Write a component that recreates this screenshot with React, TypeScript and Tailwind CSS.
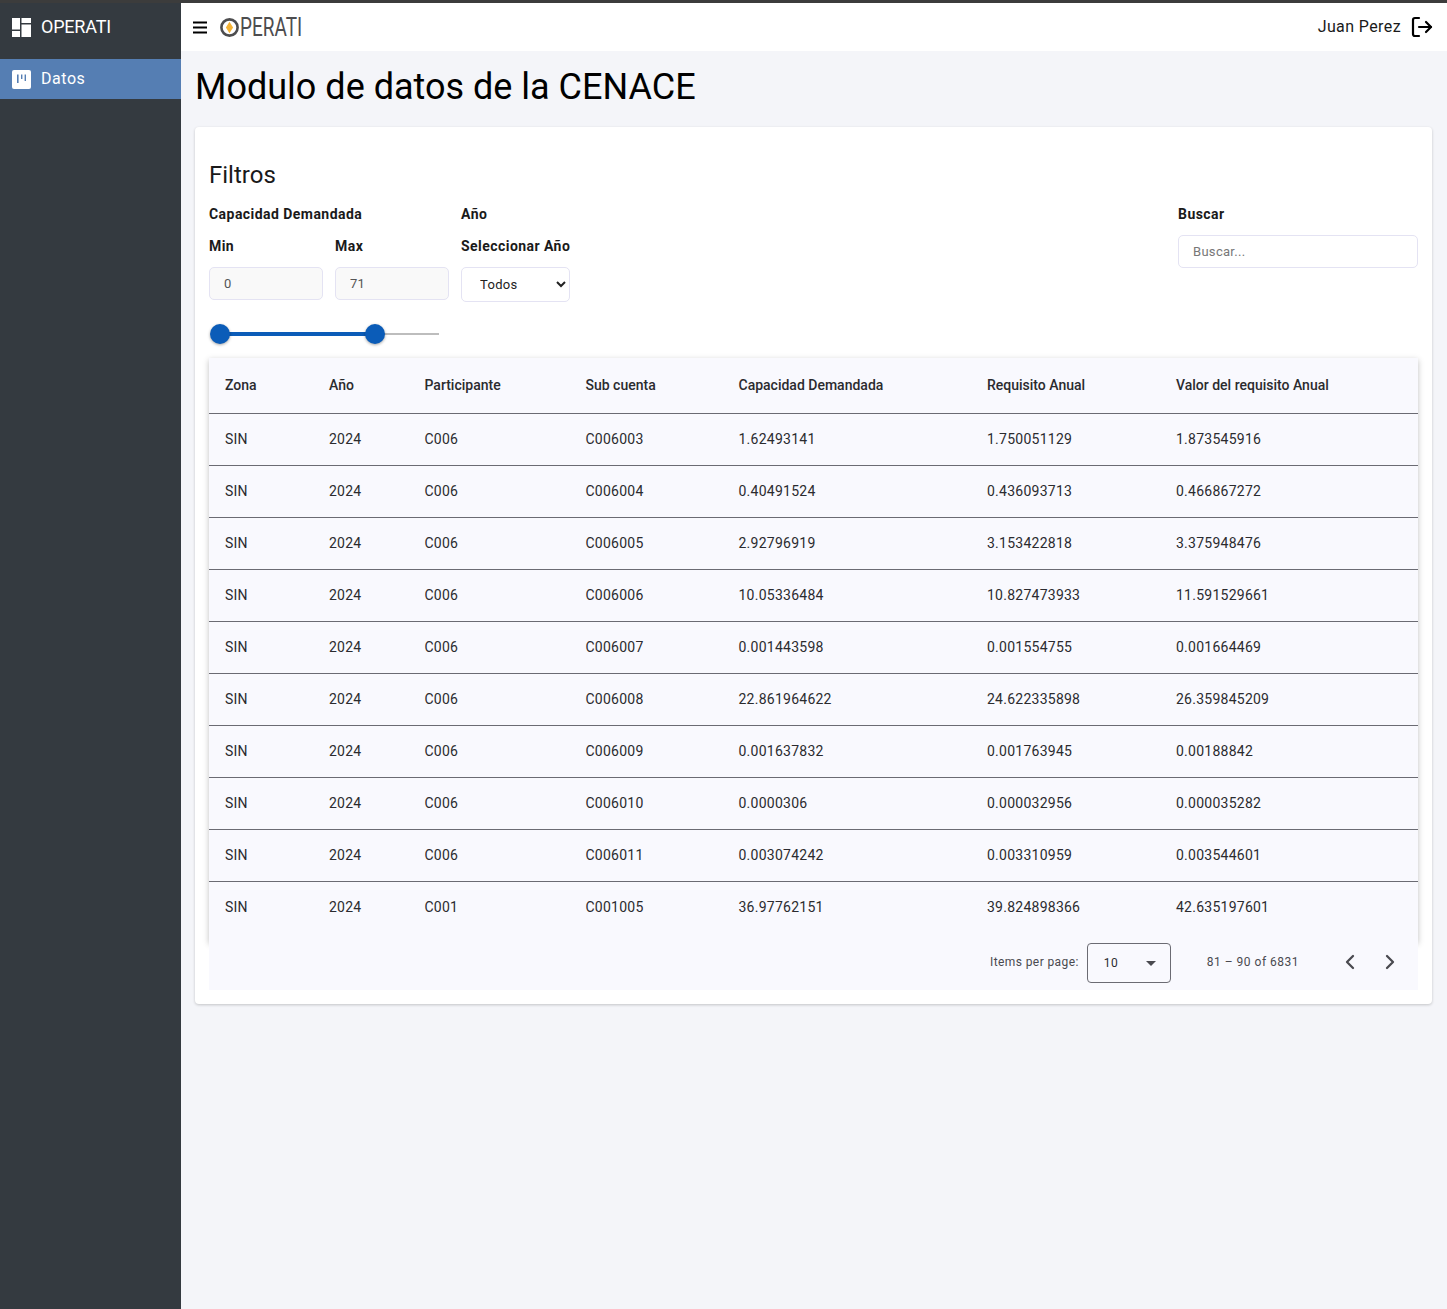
import React from 'react';
import { ChevronLeft, ChevronRight, LogOut } from 'lucide-react';

const columns = [
  { label: 'Zona', width: 'w-[104px]' },
  { label: 'Año', width: 'w-[95.5px]' },
  { label: 'Participante', width: 'w-[161px]' },
  { label: 'Sub cuenta', width: 'w-[153px]' },
  { label: 'Capacidad Demandada', width: 'w-[248.5px]' },
  { label: 'Requisito Anual', width: 'w-[189px]' },
  { label: 'Valor del requisito Anual', width: '' },
];

const rows = [
  ['SIN', '2024', 'C006', 'C006003', '1.62493141', '1.750051129', '1.873545916'],
  ['SIN', '2024', 'C006', 'C006004', '0.40491524', '0.436093713', '0.466867272'],
  ['SIN', '2024', 'C006', 'C006005', '2.92796919', '3.153422818', '3.375948476'],
  ['SIN', '2024', 'C006', 'C006006', '10.05336484', '10.827473933', '11.591529661'],
  ['SIN', '2024', 'C006', 'C006007', '0.001443598', '0.001554755', '0.001664469'],
  ['SIN', '2024', 'C006', 'C006008', '22.861964622', '24.622335898', '26.359845209'],
  ['SIN', '2024', 'C006', 'C006009', '0.001637832', '0.001763945', '0.00188842'],
  ['SIN', '2024', 'C006', 'C006010', '0.0000306', '0.000032956', '0.000035282'],
  ['SIN', '2024', 'C006', 'C006011', '0.003074242', '0.003310959', '0.003544601'],
  ['SIN', '2024', 'C001', 'C001005', '36.97762151', '39.824898366', '42.635197601'],
];

function Sidebar() {
  return (
    <aside className="w-[181px] shrink-0 bg-[#343a40] text-white">
      <div className="flex h-[48px] items-center gap-[10px] pl-[12px]">
        <svg width="19" height="19" viewBox="0 0 19 19" fill="#fff">
          <rect x="0" y="0" width="8" height="11.5" />
          <rect x="9.5" y="0" width="9.5" height="5" />
          <rect x="9.5" y="6.5" width="9.5" height="12.5" />
          <rect x="0" y="13" width="8" height="6" />
        </svg>
        <span className="pb-[2px] text-[18px] tracking-[-0.2px]">OPERATI</span>
      </div>
      <div className="mt-[8px] flex h-[40px] items-center gap-[10px] bg-[#557eb3] pl-[12px]">
        <svg width="19" height="19" viewBox="0 0 19 19">
          <rect width="19" height="19" rx="2" fill="#fff" />
          <path d="M5 4.5h1.6V13H5zM9 4.5h1.4V9H9zM12.6 4.5H14V11h-1.4z" fill="#557eb3" />
        </svg>
        <span className="text-[16px] tracking-[0.55px]">Datos</span>
      </div>
    </aside>
  );
}

function Header() {
  return (
    <header className="flex h-[48px] items-center justify-between bg-white pl-[12px] pr-[13px]">
      <div className="flex items-center">
        <svg width="14" height="13" viewBox="0 0 14 13" fill="#000">
          <rect y="0.5" width="14" height="2" />
          <rect y="5.5" width="14" height="2" />
          <rect y="10.5" width="14" height="2" />
        </svg>
        <svg width="19" height="19" viewBox="0 0 19 19" className="ml-[13px]">
          <circle cx="9.5" cy="9.5" r="8.1" fill="none" stroke="#4d4d4f" strokeWidth="2.6" />
          <path d="M9.5 3.8 5.9 9.4l3.6 5.8 3.6-5.8z" fill="#f5b335" />
        </svg>
        <span className="ml-[1px] origin-left scale-x-[0.76] text-[25px] font-normal leading-none text-[#4d4d4f]">PERATI</span>
      </div>
      <div className="flex items-center gap-[9px]">
        <span className="text-[16px] tracking-[0.4px] text-[#1a1a1a]">Juan Perez</span>
        <LogOut size={24} strokeWidth={2.2} className="text-black" />
      </div>
    </header>
  );
}

function Filters() {
  return (
    <div className="flex items-start justify-between">
      <div className="flex gap-[12px]">
        <div className="w-[240px]">
          <p className="text-[14px] font-bold leading-[20px] tracking-[0.45px] text-[#1a1a1a]">Capacidad Demandada</p>
          <div className="mt-[12px] flex gap-[12px]">
            <div className="w-[114px]">
              <p className="text-[14px] font-bold leading-[20px] tracking-[0.45px] text-[#1a1a1a]">Min</p>
              <input readOnly value="0" className="mt-[11px] h-[33px] w-full rounded-[5px] border border-[#e4e3f3] bg-[#f9f9f9] px-[14px] text-[13px] tracking-[0.3px] text-[#555] outline-none" />
            </div>
            <div className="w-[114px]">
              <p className="text-[14px] font-bold leading-[20px] tracking-[0.45px] text-[#1a1a1a]">Max</p>
              <input readOnly value="71" className="mt-[11px] h-[33px] w-full rounded-[5px] border border-[#e4e3f3] bg-[#f9f9f9] px-[14px] text-[13px] tracking-[0.3px] text-[#555] outline-none" />
            </div>
          </div>
        </div>
        <div>
          <p className="text-[14px] font-bold leading-[20px] tracking-[0.45px] text-[#1a1a1a]">Año</p>
          <p className="mt-[12px] text-[14px] font-bold leading-[20px] tracking-[0.45px] text-[#1a1a1a]">Seleccionar Año</p>
          <select className="mt-[11px] h-[35px] w-[109px] rounded-[5px] border border-[#e4e3f3] bg-white pl-[14px] text-[13px] tracking-[0.3px] text-[#222] outline-none" defaultValue="Todos">
            <option>Todos</option>
          </select>
        </div>
      </div>
      <div className="w-[240px]">
        <p className="text-[14px] font-bold leading-[20px] tracking-[0.45px] text-[#1a1a1a]">Buscar</p>
        <input placeholder="Buscar..." className="mt-[11px] h-[33px] w-full rounded-[5px] border border-[#e4e3f3] bg-white px-[14px] text-[13px] tracking-[0.3px] outline-none placeholder:text-[#777]" />
      </div>
    </div>
  );
}

function RangeSlider() {
  return (
    <div className="relative mt-[20px] h-[24px] w-[230px]">
      <div className="absolute left-[10px] right-0 top-[11px] h-[2px] bg-[#bdbdbd]" />
      <div className="absolute left-[10px] top-[10px] h-[4px] w-[156px] bg-[#0b5cb8]" />
      <div className="absolute left-[1px] top-[2px] h-[20px] w-[20px] rounded-full bg-[#0b5cb8] shadow-[0_1px_3px_rgba(0,0,0,0.35)]" />
      <div className="absolute left-[156px] top-[2px] h-[20px] w-[20px] rounded-full bg-[#0b5cb8] shadow-[0_1px_3px_rgba(0,0,0,0.35)]" />
    </div>
  );
}

function DataTable() {
  return (
    <div className="mt-[12px]">
      <div className="bg-[#f9f9fe] pb-[8px] shadow-[0_2px_6px_rgba(0,0,0,0.25)]">
        <div className="flex h-[56px] items-center border-b border-[#6b6b73] pl-[16px] text-[14px] font-medium text-[#2b2b2f]">
          {columns.map((col) => (
            <div key={col.label} className={col.width}>{col.label}</div>
          ))}
        </div>
        {rows.map((row, i) => (
          <div key={row[3]} className={`flex h-[52px] items-center border-b pl-[16px] text-[14px] tracking-[0.25px] text-[#2b2b2f] ${i < rows.length - 1 ? 'border-[#6b6b73]' : 'border-transparent'}`}>
            {row.map((cell, j) => (
              <div key={j} className={columns[j].width}>{cell}</div>
            ))}
          </div>
        ))}
      </div>
      <div className="relative flex h-[48px] items-start justify-end bg-[#f9f9fe] pr-[16px] pt-[1px] text-[#4a4a50]">
        <span className="mt-[10px] text-[12px] tracking-[0.4px]">Items per page:</span>
        <div className="ml-[8px] flex h-[40px] w-[84px] items-center justify-between rounded-[4px] border border-[#6b6b73] pl-[16px] pr-[14px]">
          <span className="text-[12px] tracking-[0.4px] text-[#2b2b2f]">10</span>
          <span className="h-0 w-0 border-x-[5px] border-t-[5px] border-x-transparent border-t-[#4a4a50]" />
        </div>
        <span className="ml-[36px] mt-[10px] text-[12px] tracking-[0.5px]">81 – 90 of 6831</span>
        <div className="ml-[39px] mt-[7px] flex items-center gap-[16px]">
          <ChevronLeft size={24} strokeWidth={2.3} />
          <ChevronRight size={24} strokeWidth={2.3} />
        </div>
      </div>
    </div>
  );
}

export default function App() {
  return (
    <div className="flex min-h-[1309px] flex-col bg-[#343a40] font-['Roboto',sans-serif]">
      <div className="h-[3px] bg-[#3c3c3c]" />
      <div className="flex flex-1">
        <Sidebar />
        <div className="min-w-0 flex-1 bg-[#f4f5f9]">
          <Header />
          <main className="pl-[14px] pr-[15px]">
            <h1 className="mt-[12px] text-[36px] font-normal leading-[48px] text-black">Modulo de datos de la CENACE</h1>
            <section className="mt-[16px] rounded-[4px] bg-white px-[14px] pb-[14px] pt-[32px] shadow-[0_1px_3px_rgba(0,0,0,0.2)]">
              <h2 className="mb-[13px] text-[24px] font-normal leading-[32px] text-[#1a1a1a]">Filtros</h2>
              <Filters />
              <RangeSlider />
              <DataTable />
            </section>
          </main>
        </div>
      </div>
    </div>
  );
}
